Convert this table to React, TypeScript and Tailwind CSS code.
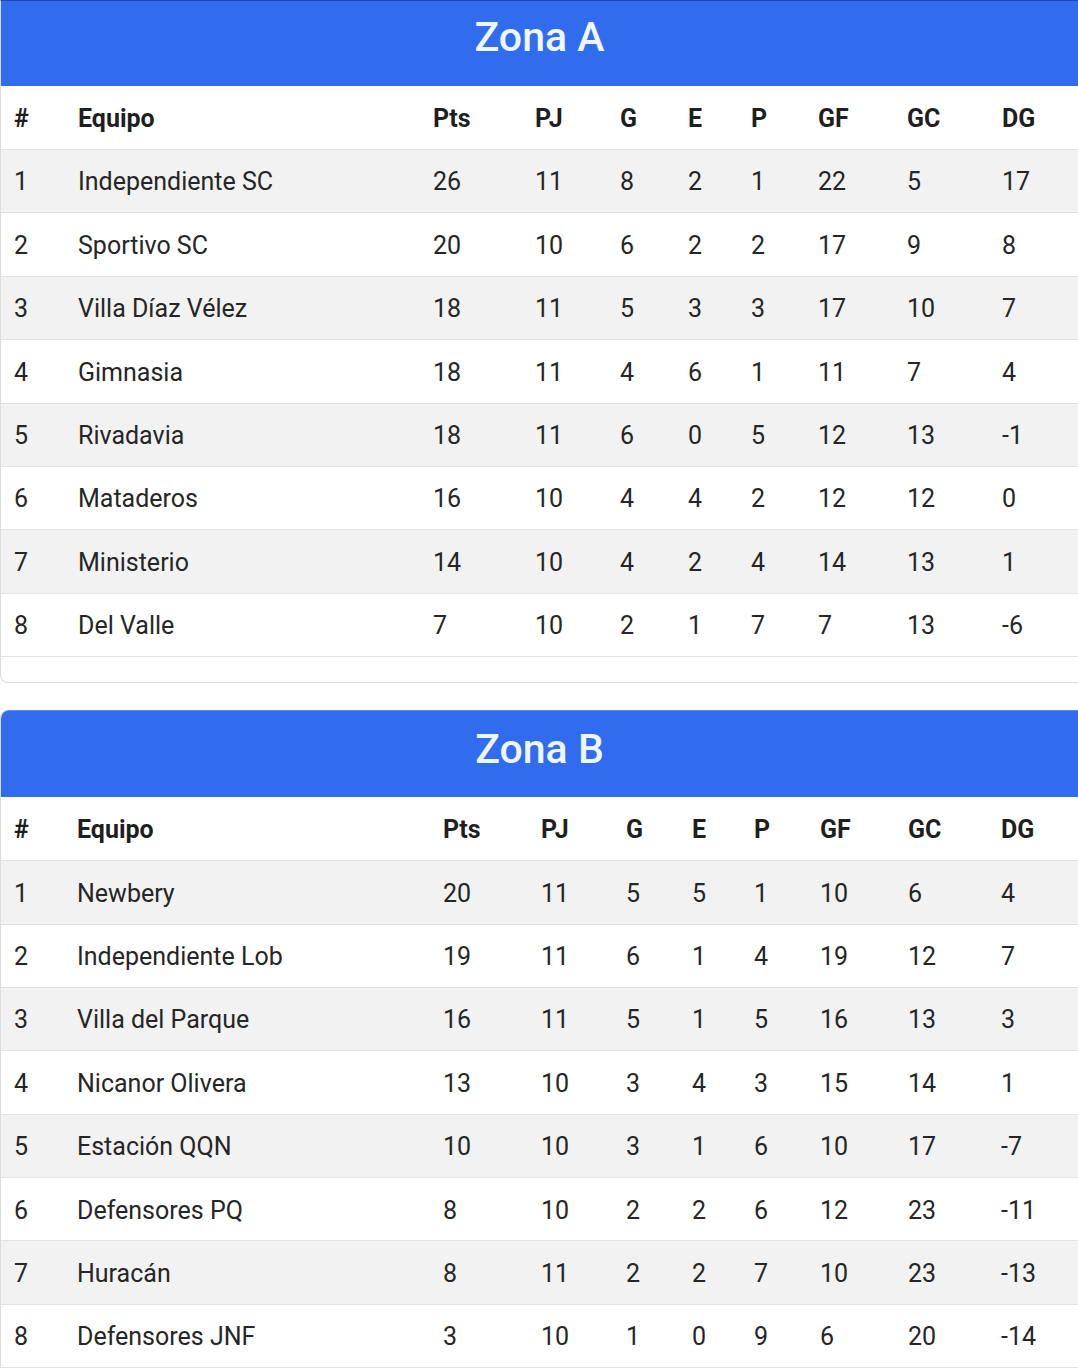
type Row = [number, string, number, number, number, number, number, number, number, number];

const zonaA: Row[] = [
  [1, 'Independiente SC', 26, 11, 8, 2, 1, 22, 5, 17],
  [2, 'Sportivo SC', 20, 10, 6, 2, 2, 17, 9, 8],
  [3, 'Villa Díaz Vélez', 18, 11, 5, 3, 3, 17, 10, 7],
  [4, 'Gimnasia', 18, 11, 4, 6, 1, 11, 7, 4],
  [5, 'Rivadavia', 18, 11, 6, 0, 5, 12, 13, -1],
  [6, 'Mataderos', 16, 10, 4, 4, 2, 12, 12, 0],
  [7, 'Ministerio', 14, 10, 4, 2, 4, 14, 13, 1],
  [8, 'Del Valle', 7, 10, 2, 1, 7, 7, 13, -6],
];

const zonaB: Row[] = [
  [1, 'Newbery', 20, 11, 5, 5, 1, 10, 6, 4],
  [2, 'Independiente Lob', 19, 11, 6, 1, 4, 19, 12, 7],
  [3, 'Villa del Parque', 16, 11, 5, 1, 5, 16, 13, 3],
  [4, 'Nicanor Olivera', 13, 10, 3, 4, 3, 15, 14, 1],
  [5, 'Estación QQN', 10, 10, 3, 1, 6, 10, 17, -7],
  [6, 'Defensores PQ', 8, 10, 2, 2, 6, 12, 23, -11],
  [7, 'Huracán', 8, 11, 2, 2, 7, 10, 23, -13],
  [8, 'Defensores JNF', 3, 10, 1, 0, 9, 6, 20, -14],
];

const headers = ['#', 'Equipo', 'Pts', 'PJ', 'G', 'E', 'P', 'GF', 'GC', 'DG'];

const ZoneTable = ({
  title,
  rows,
  cols,
  first,
}: {
  title: string;
  rows: Row[];
  cols: string;
  first?: boolean;
}) => (
  <div
    className={
      first
        ? 'border-l border-b border-t border-[#dcdcdc] border-t-[#2447b5] rounded-bl-lg bg-white pb-[25px]'
        : 'border-l border-b border-[#dcdcdc] rounded-l-lg bg-white pb-[25px] overflow-hidden'
    }
  >
    <div
      className={
        first
          ? 'h-[85px] bg-[#316bee] flex justify-center pt-[16px]'
          : 'h-[87px] bg-[#316bee] border-t border-[#5b8df2] rounded-tl-lg flex justify-center pt-[18px]'
      }
    >
      <h2 className="text-[41px] leading-[40px] font-medium text-[#eef7ff]">{title}</h2>
    </div>

    <div className={`grid ${cols} h-[64px] items-center pl-[13px] pt-[2px] border-b border-[#e2e2e2] font-bold text-[#1f1f1f]`}>
      {headers.map((h) => (
        <div key={h}>{h}</div>
      ))}
    </div>

    {rows.map((row, i) => (
      <div
        key={row[0]}
        className={`grid ${cols} h-[63.4px] items-center pl-[13px] pt-[2px] border-b border-[#e2e2e2] ${
          i % 2 === 0 ? 'bg-[#f2f2f2]' : 'bg-white'
        }`}
      >
        {row.map((cell, j) => (
          <div key={j} className="whitespace-nowrap">
            {cell}
          </div>
        ))}
      </div>
    ))}
  </div>
);

export default function App() {
  return (
    <div className="w-[1078px] bg-white font-['Roboto','Liberation_Sans',sans-serif] text-[25px] text-[#262626] flex flex-col gap-[27px]">
      <ZoneTable
        title="Zona A"
        rows={zonaA}
        cols="grid-cols-[64px_355px_102px_85px_68px_63px_67px_89px_95px_1fr]"
        first
      />
      <ZoneTable
        title="Zona B"
        rows={zonaB}
        cols="grid-cols-[63px_366px_98px_85px_66px_62px_66px_88px_93px_1fr]"
      />
    </div>
  );
}
